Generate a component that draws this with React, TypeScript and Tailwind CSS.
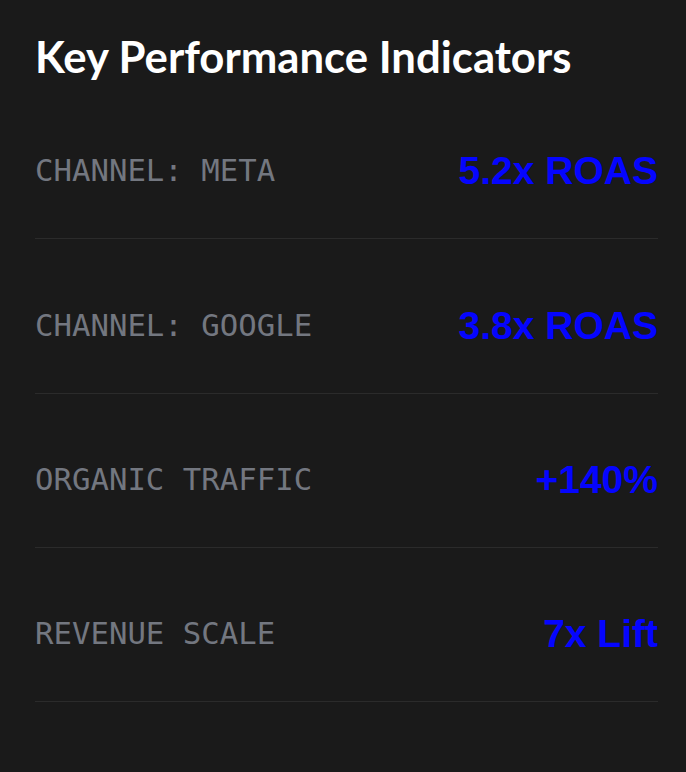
const rows = [
  { label: 'CHANNEL: META', value: '5.2x ROAS' },
  { label: 'CHANNEL: GOOGLE', value: '3.8x ROAS' },
  { label: 'ORGANIC TRAFFIC', value: '+140%' },
  { label: 'REVENUE SCALE', value: '7x Lift' },
]

export default function App() {
  return (
    <div className="min-h-[772px] w-full bg-[#1a1a1a] pl-[35px] pr-[28px] pt-[29px]">
      <h2 className="font-['Lato',sans-serif] text-[43.7px] font-bold leading-[54px] text-white">
        Key Performance Indicators
      </h2>

      <div className="mt-[2px] flex flex-col">
        {rows.map((row) => (
          <div
            key={row.label}
            className="flex items-center justify-between border-b border-[#2b2b2b] pt-[66.33px] pb-[47px]"
          >
            <span className="font-['DejaVu_Sans_Mono',monospace] text-[30.7px] leading-[40px] text-[#737780]">
              {row.label}
            </span>
            <span className="font-['Liberation_Sans',Arial,sans-serif] text-[39px] font-bold leading-[40px] text-[#0505ff]">
              {row.value}
            </span>
          </div>
        ))}
      </div>
    </div>
  )
}
